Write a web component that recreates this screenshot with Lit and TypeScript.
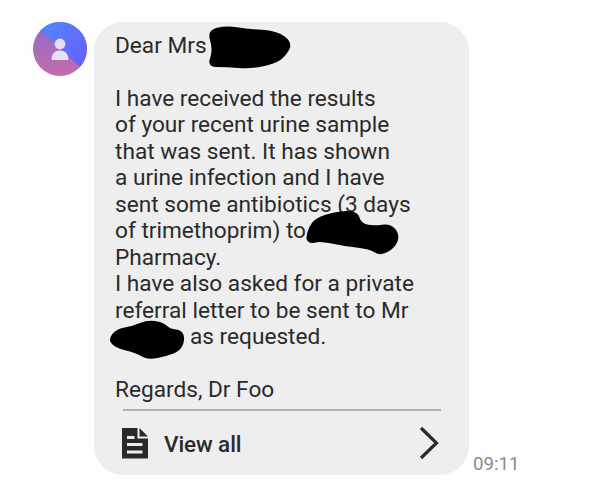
import { LitElement, html, css, svg } from "lit";
import { customElement } from "lit/decorators.js";

const LINES = [
  "Dear Mrs",
  "\u00a0",
  "I have received the results",
  "of your recent urine sample",
  "that was sent. It has shown",
  "a urine infection and I have",
  "sent some antibiotics (3 days",
  "of trimethoprim) to",
  "Pharmacy.",
  "I have also asked for a private",
  "referral letter to be sent to Mr",
  "as requested.",
  "\u00a0",
  "Regards, Dr Foo",
];

type P = [number, number];

const BLOBS: P[][] = [
  [[207, 30], [227, 25.5], [247, 29], [277, 30.5], [293, 43], [285, 57], [274, 64], [250, 69], [227, 67], [207, 67], [213, 50]],
  [[305, 239], [311, 222], [323, 215], [343, 210.5], [358, 212], [361, 223], [373, 226], [391, 223.5], [400, 235], [395, 248], [380, 256], [370, 249], [343, 246], [320, 241], [311, 244]],
  [[108, 340], [116, 329], [133, 326], [147, 320], [163, 322], [170, 329], [182, 330], [185, 340], [180, 351], [167, 356], [148, 360], [136, 353], [116, 348]],
];

function smooth(pts: P[]): string {
  const mid = (a: P, b: P): P => [(a[0] + b[0]) / 2, (a[1] + b[1]) / 2];
  const n = pts.length;
  const start = mid(pts[n - 1], pts[0]);
  let d = `M${start[0]} ${start[1]}`;
  for (let i = 0; i < n; i++) {
    const m = mid(pts[i], pts[(i + 1) % n]);
    d += `Q${pts[i][0]} ${pts[i][1]} ${m[0]} ${m[1]}`;
  }
  return d + "Z";
}

@customElement("app-root")
export class AppRoot extends LitElement {
  static styles = css`
    :host {
      display: block;
      width: 600px;
      height: 498px;
      background: #fefefe;
      font-family: Roboto, "Liberation Sans", sans-serif;
      color: #2a2a2a;
      overflow: hidden;
      position: relative;
    }
    .row {
      display: flex;
      align-items: flex-end;
      padding: 22px 0 0 33px;
    }
    .avatar {
      width: 54px;
      height: 54px;
      flex: none;
      align-self: flex-start;
      margin-right: 7px;
    }
    .bubble {
      width: 375px;
      height: 453px;
      box-sizing: border-box;
      background: #eeeeee;
      border-radius: 29px;
      padding: 11px 0 0 21px;
      display: flex;
      flex-direction: column;
    }
    .text {
      font-size: 22.65px;
      line-height: 26.45px;
      white-space: pre;
    }
    .last-pad { padding-left: 75px; }
    .divider {
      height: 1.5px;
      background: #b0b0b0;
      margin: 6px 28px 0 8px;
    }
    .footer {
      display: flex;
      align-items: center;
      height: 66px;
      margin-right: 30px;
    }
    .doc {
      width: 28px;
      height: 32px;
      margin-left: 6px;
      flex: none;
    }
    .view {
      font-size: 22.5px;
      font-weight: 500;
      margin-left: 15px;
      flex: 1;
      letter-spacing: -0.1px;
      position: relative;
      top: 1px;
    }
    .chev { width: 20px; height: 34px; flex: none; }
    .time {
      font-size: 18.7px;
      color: #8a8a8a;
      margin-left: 4px;
      line-height: 20px;
      margin-bottom: 1px;
    }
    .blob {
      position: absolute;
      left: 0;
      top: 0;
      width: 600px;
      height: 498px;
      pointer-events: none;
    }
  `;

  private avatar() {
    return html`<svg class="avatar" viewBox="0 0 54 54">
      <defs>
        <linearGradient id="g" x1="0" y1="0" x2="0" y2="1">
          <stop offset="0.1" stop-color="#8f6cc8" />
          <stop offset="1" stop-color="#c56cab" />
        </linearGradient>
        <linearGradient id="b" x1="0" y1="0" x2="1" y2="1">
          <stop offset="0.2" stop-color="#5580fb" />
          <stop offset="0.8" stop-color="#6464fb" />
        </linearGradient>
        <clipPath id="c"><circle cx="27" cy="27" r="27" /></clipPath>
      </defs>
      <g clip-path="url(#c)">
        <rect width="54" height="54" fill="url(#g)" />
        <polygon points="0,1.500 54,51.500 54,0 0,0" fill="url(#b)" />
      </g>
      <circle cx="27" cy="22" r="5.400" fill="#e9dff3" />
      <path d="M18.500 38c0-6.500 3.500-9.500 8.500-9.500s8.500 3 8.500 9.500z" fill="#e9dff3" />
    </svg>`;
  }

  render() {
    return html`
      <div class="row">
        ${this.avatar()}
        <div class="bubble">
          <div class="text">${LINES.slice(0, 11).join("\n")}</div>
          <div class="text last-pad">${LINES[11]}</div>
          <div class="text">${LINES.slice(12).join("\n")}</div>
          <div class="divider"></div>
          <div class="footer">
            <svg class="doc" viewBox="0 0 28 32">
              <path fill-rule="evenodd" fill="#2a2a2a" d="M1 1h15.500v10.500h10.500v20h-26zM6 9v3h7.500v-3zM6 16v3h15.500v-3zM6 23.500v3h15.500v-3z" />
              <path fill="#2a2a2a" d="M18.500 1l8.500 8.500h-8.500z" />
            </svg>
            <span class="view">View all</span>
            <svg class="chev" viewBox="0 0 20 34">
              <path d="M2 2l15.500 15-15.500 15" fill="none" stroke="#2a2a2a" stroke-width="3.200" />
            </svg>
          </div>
        </div>
        <span class="time">09:11</span>
      </div>
      <svg class="blob" viewBox="0 0 600 498">
        ${BLOBS.map((b) => svg`<path fill="#000" d=${smooth(b)} />`)}
      </svg>
    `;
  }
}
